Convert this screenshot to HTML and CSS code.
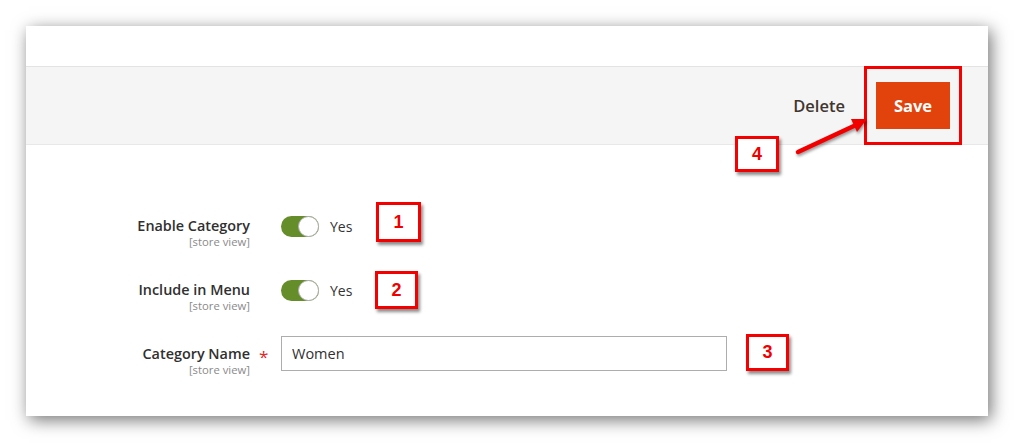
FILE: index.html
```html
<!DOCTYPE html>
<html lang="en">
<head>
<meta charset="utf-8">
<title>Category</title>
<link rel="stylesheet" href="styles.css">
</head>
<body>
<div class="panel">
  <div class="header"></div>
  <div class="toolbar">
    <button class="btn-delete" type="button">Delete</button>
    <button class="btn-save" type="button">Save</button>
  </div>
  <div class="form">
    <div class="row">
      <div class="label"><span class="label-main">Enable Category</span><span class="scope">[store view]</span></div>
      <div class="mark"></div>
      <div class="control"><span class="toggle"><span class="knob"></span></span><span class="toggle-text">Yes</span></div>
    </div>
    <div class="row row-second">
      <div class="label"><span class="label-main">Include in Menu</span><span class="scope">[store view]</span></div>
      <div class="mark"></div>
      <div class="control"><span class="toggle"><span class="knob"></span></span><span class="toggle-text">Yes</span></div>
    </div>
    <div class="row row-input">
      <div class="label label-input"><span class="label-main">Category Name</span><span class="scope">[store view]</span></div>
      <div class="mark mark-input">*</div>
      <div class="control"><input class="text-input" type="text" value="Women"></div>
    </div>
  </div>

  <div class="note note-save"></div>
  <div class="note note-4"><span>4</span></div>
  <div class="note note-1"><span>1</span></div>
  <div class="note note-2"><span>2</span></div>
  <div class="note note-3"><span>3</span></div>
  <svg class="arrow" width="962" height="390" viewBox="0 0 962 390">
    <line x1="772" y1="126" x2="830" y2="99" stroke="#f20000" stroke-width="4.5" stroke-linecap="round"/>
    <polygon points="841,93 831,106 825,93" fill="#f20000"/>
  </svg>
</div>
</body>
</html>
```
FILE: styles.css
```css
html, body {
  margin: 0;
  padding: 0;
  background: #ffffff;
  overflow: hidden;
}
body {
  width: 1014px;
  height: 443px;
  padding: 26px 0 0 26px;
  box-sizing: border-box;
  font-family: "Open Sans", "Liberation Sans", sans-serif;
}
.panel {
  position: relative;
  width: 962px;
  height: 390px;
  background: #ffffff;
  box-shadow: 3px 4px 16px rgba(0, 0, 0, 0.55);
}
.header {
  height: 40px;
}
.toolbar {
  height: 77px;
  background: #f5f5f5;
  border-top: 1px solid #e3e3e3;
  border-bottom: 1px solid #e8e8e8;
  display: flex;
  align-items: center;
  justify-content: flex-end;
  padding-right: 38px;
  gap: 31px;
}
.btn-delete {
  border: 0;
  background: transparent;
  padding: 0;
  font-family: "Open Sans", "Liberation Sans", sans-serif;
  font-size: 16.5px;
  font-weight: 600;
  color: #41362f;
}
.btn-save {
  width: 74px;
  height: 47px;
  border: 0;
  background: #e2430c;
  color: #ffffff;
  font-family: "Open Sans", "Liberation Sans", sans-serif;
  font-size: 16.5px;
  font-weight: 700;
  padding: 0;
}
.form {
  padding-top: 71px;
}
.row {
  display: grid;
  grid-template-columns: 224px 31px auto;
  align-items: start;
}
.row-second {
  margin-top: 32px;
}
.row-input {
  margin-top: 24px;
}
.label {
  display: flex;
  flex-direction: column;
  align-items: flex-end;
  text-align: right;
}
.label-input {
  padding-top: 8px;
}
.label-main {
  font-size: 14.4px;
  font-weight: 600;
  line-height: 20px;
  color: #303030;
}
.scope {
  font-size: 11.3px;
  line-height: 12px;
  color: #8a8a8a;
}
.mark-input {
  color: #e22626;
  font-size: 17px;
  line-height: 34px;
  padding-left: 9px;
  padding-top: 4px;
}
.control {
  display: flex;
  align-items: center;
}
.toggle {
  position: relative;
  width: 38px;
  height: 21px;
  border-radius: 11px;
  background: #658e2a;
  display: inline-block;
}
.knob {
  position: absolute;
  right: 0;
  top: 0;
  width: 19px;
  height: 19px;
  border-radius: 50%;
  background: #ffffff;
  border: 1px solid #b0b0b0;
}
.toggle-text {
  margin-left: 11px;
  font-size: 14px;
  color: #333333;
  line-height: 21px;
}
.text-input {
  width: 446px;
  height: 35px;
  box-sizing: border-box;
  border: 1px solid #adadad;
  padding: 0 10px;
  font-family: "Open Sans", "Liberation Sans", sans-serif;
  font-size: 14.5px;
  color: #303030;
  outline: none;
}
.note {
  position: absolute;
  box-sizing: border-box;
  border: 3px solid #f40000;
  background: #ffffff;
  box-shadow: 2px 3px 3px rgba(0, 0, 0, 0.45);
  display: flex;
  align-items: center;
  justify-content: center;
  font-family: "Liberation Sans", Arial, sans-serif;
  font-weight: 700;
  font-size: 18px;
  color: #f00000;
}
.note-save {
  left: 838px;
  top: 40px;
  width: 98px;
  height: 79px;
  background: transparent;
  box-shadow: none;
}
.note-4 { left: 709px; top: 110px; width: 44px; height: 36px; }
.note-1 { left: 350px; top: 176px; width: 45px; height: 40px; }
.note-2 { left: 349px; top: 245px; width: 43px; height: 38px; }
.note-3 { left: 720px; top: 308px; width: 43px; height: 37px; }
.arrow {
  position: absolute;
  left: 0;
  top: 0;
  pointer-events: none;
  filter: drop-shadow(1px 2px 1.5px rgba(0, 0, 0, 0.4));
}
```
